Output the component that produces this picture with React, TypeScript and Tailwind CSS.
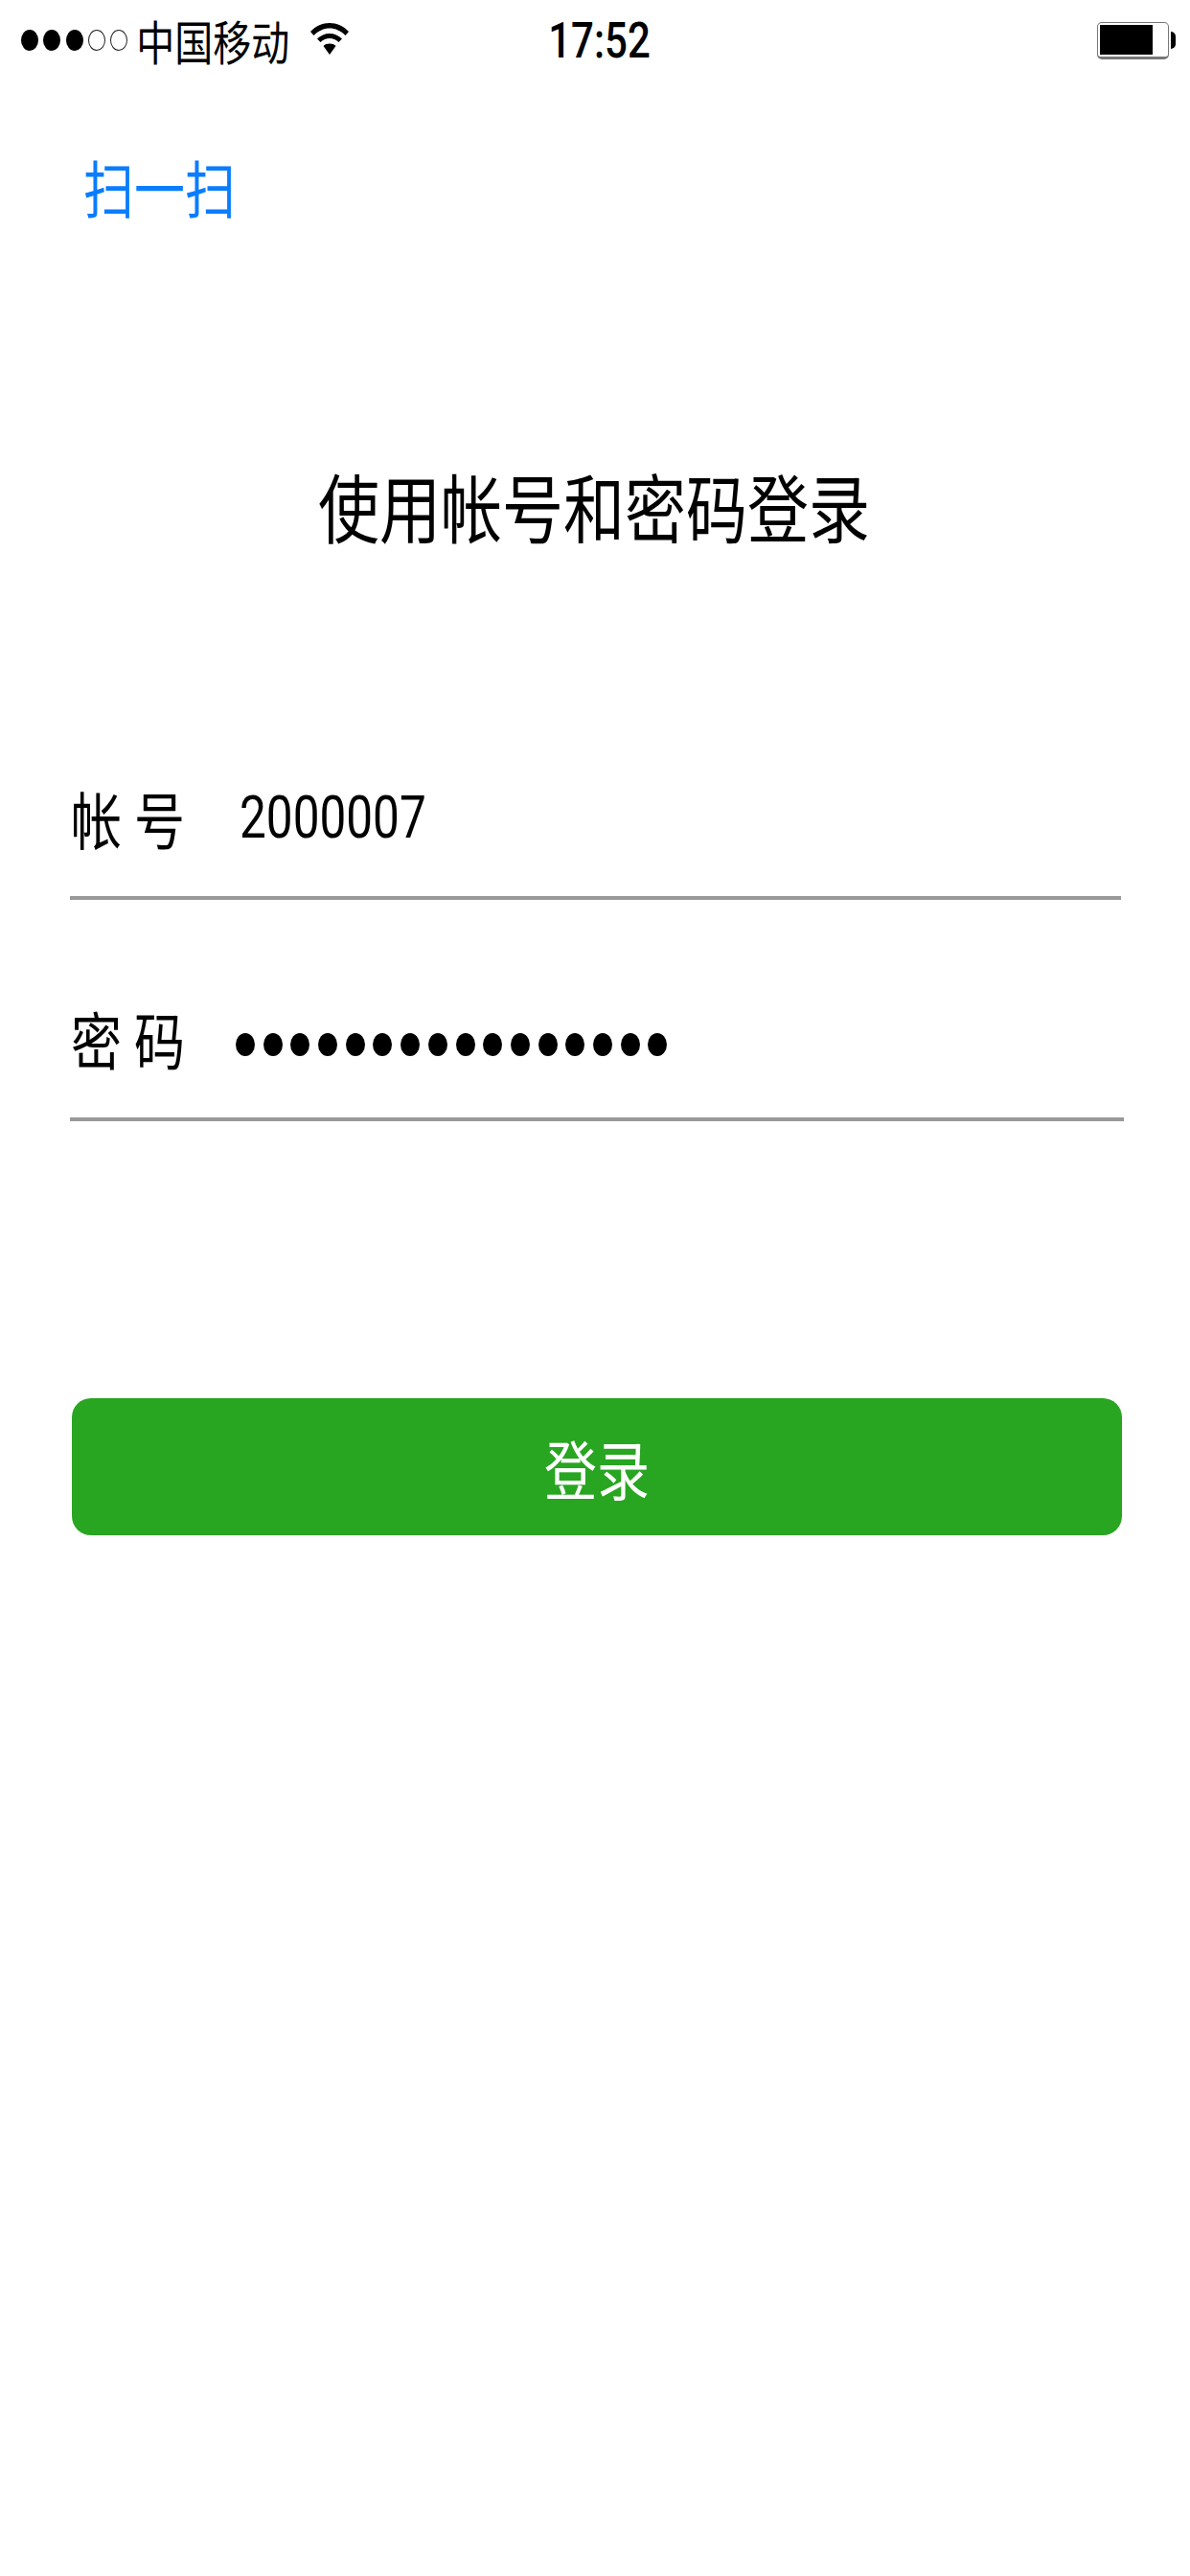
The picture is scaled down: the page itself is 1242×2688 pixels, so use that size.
const cjk = { fontFamily: '"Noto Sans CJK SC", "Liberation Sans", sans-serif' };
const clock = { fontFamily: 'Roboto, "Liberation Sans", sans-serif' };

function Ellipse({ filled }: { filled: boolean }) {
  return (
    <span
      className={
        filled
          ? "block h-[22px] w-[18px] rounded-[50%] bg-black"
          : "block h-[22px] w-[18px] rounded-[50%] border border-[#222]"
      }
    />
  );
}

function Wifi() {
  return (
    <svg viewBox="0 0 40 36" className="h-[36px] w-[40px]">
      <path d="M0 11 C11 -1 29 -1 40 11 L36.5 15 C27 5 13 5 3.5 15 Z" fill="#000" />
      <path d="M7 18.5 C14 11 26 11 33 18.5 L29.500 22 C24 16.500 16 16.500 10.500 22 Z" fill="#000" />
      <path d="M13.500 26 C17 22.800 23 22.800 26.500 26 L20 35 Z" fill="#000" />
    </svg>
  );
}

function Battery() {
  return (
    <div className="flex items-center">
      <div className="flex h-[39px] w-[75px] items-stretch rounded-[5px] border border-[#777] border-b-[3px] p-[2px]">
        <div className="w-[55px] bg-black" />
      </div>
      <div className="ml-[2px] h-[18px] w-[5px] rounded-r-full bg-black" />
    </div>
  );
}

export default function App() {
  return (
    <div className="flex h-[2688px] w-[1242px] flex-col bg-white text-black" style={cjk}>
      <div className="flex h-[84px] items-center pl-[22px]">
        <div className="flex items-center gap-[5.300px]">
          <Ellipse filled />
          <Ellipse filled />
          <Ellipse filled />
          <Ellipse filled={false} />
          <Ellipse filled={false} />
        </div>
        <span className="ml-[9px] inline-block w-[160px] scale-y-[1.217] text-[40px] leading-[48px] whitespace-nowrap">中国移动</span>
        <div className="mb-[4px] ml-[22px] flex">
          <Wifi />
        </div>
        <span className="ml-[208px] mt-[2px] inline-block w-[110px] scale-y-[1.217] text-[42px] font-medium leading-[48px] whitespace-nowrap" style={clock}>17:52</span>
        <div className="ml-[463px] flex">
          <Battery />
        </div>
      </div>

      <div className="ml-[87px] mt-[80px] h-[60px] scale-y-[1.217] origin-center text-[53px] leading-[60px] text-[#0a7dff]">扫一扫</div>

      <div className="mt-[263px] flex h-[80px] justify-center pr-[2px] text-[64px] leading-[80px]">
        <span className="inline-block scale-y-[1.217] whitespace-nowrap">使用帐号和密码登录</span>
      </div>

      <div className="ml-[73px] mt-[203px] flex h-[169px] w-[1097px] items-center border-b-[4px] border-[#999999]">
        <span className="ml-[1px] inline-block w-[176px] scale-y-[1.217] text-[53px] leading-[60px] whitespace-nowrap">帐<span className="ml-[13px]">号</span></span>
        <span className="inline-block scale-y-[1.217] text-[49.500px] leading-[60px] whitespace-nowrap" style={clock}>2000007</span>
      </div>

      <div className="ml-[73px] mt-[60px] flex h-[171px] w-[1100px] items-center border-b-[4px] border-[#999999]">
        <span className="ml-[1px] inline-block w-[172px] scale-y-[1.217] text-[53px] leading-[60px] whitespace-nowrap">密<span className="ml-[13px]">码</span></span>
        <div className="mt-[14px] flex gap-[8.700px]">
          {Array.from({ length: 16 }).map((_, i) => (
            <span key={i} className="block h-[24px] w-[20px] rounded-[50%] bg-black" />
          ))}
        </div>
      </div>

      <div className="ml-[75px] mt-[289px] flex h-[143px] w-[1096px] items-center justify-center rounded-[20px] bg-[#28a521] text-[55px] text-white">
        <span className="inline-block scale-y-[1.217] leading-[60px]">登录</span>
      </div>
    </div>
  );
}
